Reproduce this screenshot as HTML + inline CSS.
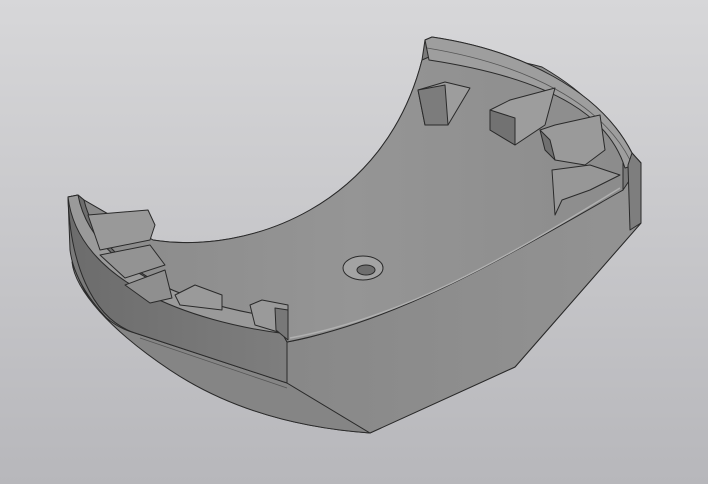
<!DOCTYPE html>
<html><head><meta charset="utf-8"><style>
html,body{margin:0;padding:0;width:708px;height:484px;overflow:hidden}
svg{display:block}
</style></head><body>
<svg width="708" height="484" viewBox="0 0 708 484" xmlns="http://www.w3.org/2000/svg">
<defs>
<linearGradient id="bg" x1="0" y1="0" x2="0" y2="1">
<stop offset="0" stop-color="#d7d7d9"/><stop offset="1" stop-color="#b7b7bb"/></linearGradient>
<linearGradient id="floor" x1="0" y1="0" x2="1" y2="0">
<stop offset="0" stop-color="#8a8a8a"/><stop offset="0.5" stop-color="#959595"/><stop offset="1" stop-color="#8c8c8c"/></linearGradient>
<linearGradient id="front" x1="0" y1="0" x2="1" y2="0">
<stop offset="0" stop-color="#888"/><stop offset="1" stop-color="#939393"/></linearGradient>
<linearGradient id="lwall" x1="0" y1="0" x2="1" y2="0">
<stop offset="0" stop-color="#6c6c6c"/><stop offset="1" stop-color="#7e7e7e"/></linearGradient>
</defs>
<rect width="708" height="484" fill="url(#bg)"/>
<g stroke="#2a2a2a" stroke-width="1" stroke-linejoin="round">
<!-- silhouette -->
<path d="M68,197 L78,195 L84,200 L153,240 C250,255 385,205 422,60 L425,40 L432,37 C520,50 600,90 632,153 L641,163 L641,223 L515,367 L370,433 C300,428 230,410 170,370 C110,330 75,290 70,250 Z" fill="#7a7a7a"/>
<!-- lower sloped left face -->
<path d="M72,262 C85,300 105,325 135,333 L287,383 L370,433 C300,428 230,410 170,370 C110,330 75,290 72,262 Z" fill="#858585"/>
<!-- left outer rim band -->
<path d="M68,197 C70,260 90,318 135,333 L287,383 L287,342 L275,320 C200,305 110,280 84,200 L78,195 Z" fill="url(#lwall)"/>
<path d="M140,338 L287,388" fill="none" stroke="#555" stroke-width="0.8"/>
<!-- front face -->
<path d="M287,342 C360,330 450,280 623,190 L641,163 L641,223 L515,367 L370,433 L287,383 Z" fill="url(#front)"/>
<!-- floor -->
<path d="M84,200 C100,270 200,310 275,320 L287,342 C400,320 500,260 623,190 L623,157 C610,120 590,95 542,67 C500,55 460,55 429,57 L422,60 C385,205 250,255 153,240 Z" fill="url(#floor)"/>
<path d="M290,338 C400,318 500,262 620,188" fill="none" stroke="#b0b0b0" stroke-width="1.5"/>
<!-- right rim -->
<path d="M425,40 L432,37 C520,50 600,90 632,153 L641,163 L625,168 C610,120 560,80 429,60 Z" fill="#9e9e9e"/>
<path d="M427,48 C530,65 602,105 630,160" fill="none" stroke="#555" stroke-width="0.8"/>
<path d="M632,153 L641,163 L641,223 L630,230 L628,165 Z" fill="#7e7e7e"/>
<!-- left rim top -->
<path d="M68,197 L78,195 C92,270 190,305 280,318 L287,334 C190,322 78,282 68,197 Z" fill="#9a9a9a"/>
<!-- right teeth -->
<path d="M418,90 L445,82 L470,88 L448,125 L425,125 Z" fill="#9d9d9d"/>
<path d="M418,90 L445,85 L448,125 L425,125 Z" fill="#7c7c7c"/>
<path d="M490,110 L510,100 L555,88 L545,125 L515,145 L490,130 Z" fill="#9d9d9d"/>
<path d="M490,110 L515,118 L515,145 L490,130 Z" fill="#727272"/>
<path d="M540,130 L555,125 L600,115 L605,150 L585,165 L555,160 Z" fill="#9a9a9a"/>
<path d="M540,130 L550,140 L555,160 L545,150 Z" fill="#707070"/>
<path d="M552,170 L590,165 L620,175 L590,190 L562,200 L555,215 Z" fill="#979797"/>
<!-- left teeth -->
<path d="M88,215 L148,210 L155,225 L150,240 L100,250 Z" fill="#999"/>
<path d="M100,255 L150,245 L165,265 L125,278 Z" fill="#939393"/>
<path d="M125,285 L165,270 L172,298 L150,303 Z" fill="#8f8f8f"/>
<path d="M175,295 L195,285 L222,295 L222,310 L180,305 Z" fill="#9a9a9a"/>
<path d="M250,305 L262,300 L288,305 L288,335 L255,325 Z" fill="#9a9a9a"/>
<path d="M275,308 L288,310 L288,340 L276,330 Z" fill="#787878"/>
<!-- screw hole -->
<ellipse cx="363" cy="268" rx="20" ry="12" fill="#a3a3a3"/>
<ellipse cx="366" cy="270" rx="9" ry="5" fill="#6e6e6e"/>
</g>
</svg>
</body></html>
